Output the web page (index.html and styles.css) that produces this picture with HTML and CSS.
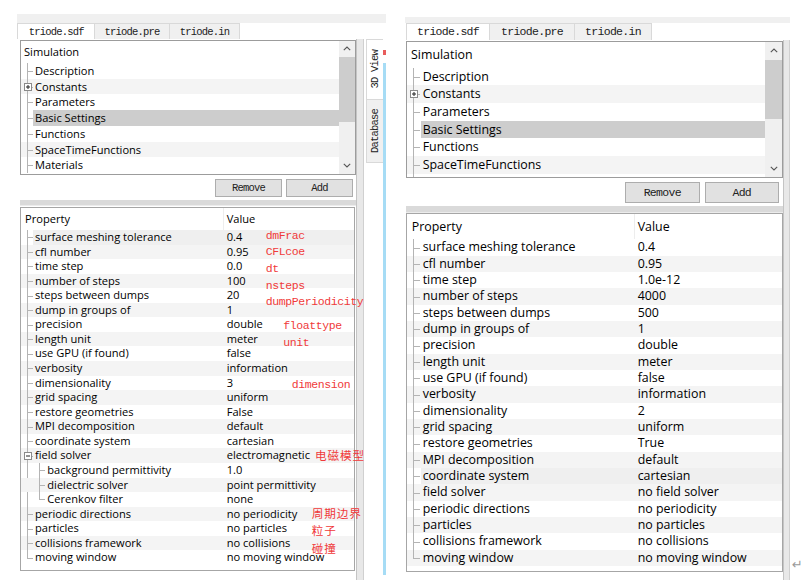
FILE: index.html
```html
<!DOCTYPE html>
<html lang="zh">
<head>
<meta charset="utf-8">
<title>triode.sdf</title>
<link rel="stylesheet" href="styles.css">
</head>
<body>
<div class="screen">

  <section class="win win-left">
    <div class="band"></div>
    <div class="win-body">
      <div class="pane">
        <div class="tabs">
          <div class="tab t1 active">triode.sdf</div>
          <div class="tab t2">triode.pre</div>
          <div class="tab t3">triode.in</div>
        </div>
        <div class="tree">
          <div class="tree-list">
            <div class="root">Simulation</div>
            <div class="node">Description</div>
            <div class="node alt"><svg class="exp" viewBox="0 0 8 8"><rect x=".5" y=".5" width="7" height="7" fill="#fff" stroke="#8a8a8a"/><path d="M2 4h4M4 2v4" stroke="#222"/></svg>Constants</div>
            <div class="node">Parameters</div>
            <div class="node sel">Basic Settings</div>
            <div class="node">Functions</div>
            <div class="node alt">SpaceTimeFunctions</div>
            <div class="node">Materials</div>
          </div>
          <div class="vscroll">
            <div class="sb-btn"><svg width="8" height="5" viewBox="0 0 8 5"><path d="M.8 4.2 4 1l3.2 3.2" fill="none" stroke="#555" stroke-width="1.1"/></svg></div>
            <div class="sb-thumb"></div>
            <div class="sb-track"></div>
            <div class="sb-btn"><svg width="8" height="5" viewBox="0 0 8 5"><path d="M.8.8 4 4l3.2-3.2" fill="none" stroke="#555" stroke-width="1.1"/></svg></div>
          </div>
        </div>
        <div class="btns">
          <button class="btn">Remove</button>
          <button class="btn">Add</button>
        </div>
        <div class="splitter"></div>
        <div class="props">
          <div class="phead"><div class="pc1">Property</div><div class="pc2">Value</div></div>
          <div class="prow cur"><div class="pc1">surface meshing tolerance</div><div class="pc2">0.4</div></div>
          <div class="prow alt"><div class="pc1">cfl number</div><div class="pc2">0.95</div></div>
          <div class="prow"><div class="pc1">time step</div><div class="pc2">0.0</div></div>
          <div class="prow alt"><div class="pc1">number of steps</div><div class="pc2">100</div></div>
          <div class="prow"><div class="pc1">steps between dumps</div><div class="pc2">20</div></div>
          <div class="prow alt"><div class="pc1">dump in groups of</div><div class="pc2">1</div></div>
          <div class="prow"><div class="pc1">precision</div><div class="pc2">double</div></div>
          <div class="prow alt"><div class="pc1">length unit</div><div class="pc2">meter</div></div>
          <div class="prow"><div class="pc1">use GPU (if found)</div><div class="pc2">false</div></div>
          <div class="prow alt"><div class="pc1">verbosity</div><div class="pc2">information</div></div>
          <div class="prow"><div class="pc1">dimensionality</div><div class="pc2">3</div></div>
          <div class="prow alt"><div class="pc1">grid spacing</div><div class="pc2">uniform</div></div>
          <div class="prow"><div class="pc1">restore geometries</div><div class="pc2">False</div></div>
          <div class="prow alt"><div class="pc1">MPI decomposition</div><div class="pc2">default</div></div>
          <div class="prow"><div class="pc1">coordinate system</div><div class="pc2">cartesian</div></div>
          <div class="prow alt"><svg class="exp" viewBox="0 0 8 8"><rect x=".5" y=".5" width="7" height="7" fill="#fff" stroke="#8a8a8a"/><path d="M2 4h4" stroke="#222"/></svg><div class="pc1">field solver</div><div class="pc2">electromagnetic</div></div>
          <div class="kids">
            <div class="prow"><div class="pc1">background permittivity</div><div class="pc2">1.0</div></div>
            <div class="prow alt"><div class="pc1">dielectric solver</div><div class="pc2">point permittivity</div></div>
            <div class="prow last"><div class="pc1">Cerenkov filter</div><div class="pc2">none</div></div>
          </div>
          <div class="prow alt"><div class="pc1">periodic directions</div><div class="pc2">no periodicity</div></div>
          <div class="prow"><div class="pc1">particles</div><div class="pc2">no particles</div></div>
          <div class="prow alt"><div class="pc1">collisions framework</div><div class="pc2">no collisions</div></div>
          <div class="prow last"><div class="pc1">moving window</div><div class="pc2">no moving window</div></div>

          <span class="note n-dmfrac">dmFrac</span>
          <span class="note n-cfl">CFLcoe</span>
          <span class="note n-dt">dt</span>
          <span class="note n-nsteps">nsteps</span>
          <span class="note n-dump">dumpPeriodicity</span>
          <span class="note n-float">floattype</span>
          <span class="note n-unit">unit</span>
          <span class="note n-dim">dimension</span>
          <span class="note cjk n-em">电磁模型</span>
          <span class="note cjk n-per">周期边界</span>
          <span class="note cjk n-part">粒子</span>
          <span class="note cjk n-coll">碰撞</span>
        </div>
      </div>
      <div class="vbar"></div>
      <div class="vtabs">
        <div class="vtab vtab-active"><span class="vtext">3D View</span></div>
        <div class="vtab vtab-db"><span class="vtext">Database</span></div>
      </div>
      <div class="side">
        <div class="side-mark"></div>
        <div class="side-line"></div>
      </div>
    </div>
  </section>

  <section class="win win-right">
    <div class="band"></div>
    <div class="win-body">
      <div class="pane">
        <div class="tabs">
          <div class="tab t1 active">triode.sdf</div>
          <div class="tab t2">triode.pre</div>
          <div class="tab t3">triode.in</div>
        </div>
        <div class="tree">
          <div class="tree-list">
            <div class="root">Simulation</div>
            <div class="node">Description</div>
            <div class="node alt"><svg class="exp" viewBox="0 0 8 8"><rect x=".5" y=".5" width="7" height="7" fill="#fff" stroke="#8a8a8a"/><path d="M2 4h4M4 2v4" stroke="#222"/></svg>Constants</div>
            <div class="node">Parameters</div>
            <div class="node sel">Basic Settings</div>
            <div class="node">Functions</div>
            <div class="node alt">SpaceTimeFunctions</div>
            <div class="node"></div>
          </div>
          <div class="vscroll">
            <div class="sb-btn"><svg width="8" height="5" viewBox="0 0 8 5"><path d="M.8 4.2 4 1l3.2 3.2" fill="none" stroke="#555" stroke-width="1.1"/></svg></div>
            <div class="sb-thumb"></div>
            <div class="sb-track"></div>
            <div class="sb-btn"><svg width="8" height="5" viewBox="0 0 8 5"><path d="M.8.8 4 4l3.2-3.2" fill="none" stroke="#555" stroke-width="1.1"/></svg></div>
          </div>
        </div>
        <div class="btns">
          <button class="btn">Remove</button>
          <button class="btn">Add</button>
        </div>
        <div class="splitter"></div>
        <div class="props">
          <div class="phead"><div class="pc1">Property</div><div class="pc2">Value</div></div>
          <div class="prow"><div class="pc1">surface meshing tolerance</div><div class="pc2">0.4</div></div>
          <div class="prow alt"><div class="pc1">cfl number</div><div class="pc2">0.95</div></div>
          <div class="prow"><div class="pc1">time step</div><div class="pc2">1.0e-12</div></div>
          <div class="prow alt"><div class="pc1">number of steps</div><div class="pc2">4000</div></div>
          <div class="prow"><div class="pc1">steps between dumps</div><div class="pc2">500</div></div>
          <div class="prow alt"><div class="pc1">dump in groups of</div><div class="pc2">1</div></div>
          <div class="prow"><div class="pc1">precision</div><div class="pc2">double</div></div>
          <div class="prow alt"><div class="pc1">length unit</div><div class="pc2">meter</div></div>
          <div class="prow"><div class="pc1">use GPU (if found)</div><div class="pc2">false</div></div>
          <div class="prow alt"><div class="pc1">verbosity</div><div class="pc2">information</div></div>
          <div class="prow"><div class="pc1">dimensionality</div><div class="pc2">2</div></div>
          <div class="prow alt"><div class="pc1">grid spacing</div><div class="pc2">uniform</div></div>
          <div class="prow"><div class="pc1">restore geometries</div><div class="pc2">True</div></div>
          <div class="prow alt"><div class="pc1">MPI decomposition</div><div class="pc2">default</div></div>
          <div class="prow cur"><div class="pc1">coordinate system</div><div class="pc2">cartesian</div></div>
          <div class="prow alt"><div class="pc1">field solver</div><div class="pc2">no field solver</div></div>
          <div class="prow"><div class="pc1">periodic directions</div><div class="pc2">no periodicity</div></div>
          <div class="prow alt"><div class="pc1">particles</div><div class="pc2">no particles</div></div>
          <div class="prow"><div class="pc1">collisions framework</div><div class="pc2">no collisions</div></div>
          <div class="prow alt last"><div class="pc1">moving window</div><div class="pc2">no moving window</div></div>
        </div>
      </div>
      <div class="vbar"></div>
    </div>
  </section>

  <div class="ret">↵</div>
</div>
</body>
</html>
```
FILE: styles.css
```css
* { box-sizing: border-box; }

html, body {
  margin: 0;
  padding: 0;
  background: #fff;
}

body {
  width: 803px;
  height: 580px;
  overflow: hidden;
  font-family: "Open Sans", "Noto Sans", sans-serif;
  color: #000;
}

.screen {
  display: flex;
  align-items: flex-start;
  height: 580px;
  padding-left: 17px;
}

/* ---------- window variables ---------- */
.win-left {
  --fs: 11.1px;
  --mono-fs: 10.5px;
  --mono-ls: -0.8px;
  --band-h: 9.3px;
  --tab-h: 16px;
  --tabs-ml: 0.3px;
  --t1w: 77.7px;
  --t2w: 75px;
  --t3w: 70px;
  --tree-mt: 0.7px;
  --box-ml: 3px;
  --box-w: 336px;
  --tree-h: 135px;
  --root-h: 22px;
  --root-pl: 3px;
  --row-h: 15.75px;
  --line-x: 6px;
  --stub-w: 6px;
  --text-x: 14px;
  --sel-x: 12px;
  --sb-w: 16px;
  --sb-btn: 16px;
  --thumb-h: 65px;
  --btn-mt: 4px;
  --btn-h: 18.5px;
  --btn-w: 67px;
  --btn-gap: 4px;
  --btn-pr: 3px;
  --split-mt: 2.5px;
  --split-h: 6px;
  --props-mt: 0.7px;
  --props-w: 335px;
  --props-h: 364.3px;
  --phead-h: 22.3px;
  --prow-h: 14.57px;
  --col1: 203px;
  --head-pl: 4px;
  --val-pl: 2.7px;
  --pane-w: 339px;
  --kid-line-x: 18.3px;
  --kid-text-x: 26.3px;
  --vbar-w: 8px;
  --vbar-mt: 16px;
  --vbar-h: 540.7px;

  margin-top: 14px;
  width: 369px;
}

.win-right {
  --fs: 12.4px;
  --mono-fs: 11.5px;
  --mono-ls: -0.7px;
  --band-h: 6px;
  --tab-h: 17.3px;
  --tabs-ml: 1px;
  --t1w: 84px;
  --t2w: 85px;
  --t3w: 77px;
  --tree-mt: 0.7px;
  --box-ml: 1px;
  --box-w: 377px;
  --tree-h: 137.6px;
  --root-h: 26px;
  --root-pl: 4px;
  --row-h: 17.7px;
  --line-x: 6.3px;
  --stub-w: 7px;
  --text-x: 15.7px;
  --sel-x: 13.7px;
  --sb-w: 17px;
  --sb-btn: 18px;
  --thumb-h: 59px;
  --btn-mt: 3.4px;
  --btn-h: 21.6px;
  --btn-w: 74.5px;
  --btn-gap: 5px;
  --btn-pr: 4px;
  --split-mt: 2.7px;
  --split-h: 7px;
  --props-mt: 0px;
  --props-w: 377px;
  --props-h: 359px;
  --phead-h: 25.5px;
  --prow-h: 16.33px;
  --col1: 228px;
  --head-pl: 4.7px;
  --val-pl: 2.7px;
  --pane-w: 378px;
  --vbar-w: 7px;
  --vbar-mt: 17.3px;
  --vbar-h: 540px;

  margin-top: 16.7px;
  margin-left: 19px;
  width: 385px;
}

/* ---------- window frame ---------- */
.win {
  display: flex;
  flex-direction: column;
}

.band {
  height: var(--band-h);
  background: #f0f0f0;
}

.win-body {
  display: flex;
  align-items: flex-start;
}

.pane {
  width: var(--pane-w);
  flex: none;
}

/* ---------- tabs ---------- */
.tabs {
  display: flex;
  height: var(--tab-h);
  margin-left: var(--tabs-ml);
}

.tab {
  height: 100%;
  display: flex;
  align-items: center;
  justify-content: center;
  font-family: "Liberation Mono", monospace;
  font-size: var(--mono-fs);
  letter-spacing: var(--mono-ls);
  color: #222;
  background: #f0f0f0;
  border: 1px solid #d9d9d9;
  border-bottom: none;
}

.tab + .tab { border-left: none; }
.tab.active { background: #fff; }
.t1 { width: var(--t1w); }
.t2 { width: var(--t2w); }
.t3 { width: var(--t3w); }

/* ---------- tree ---------- */
.tree {
  display: flex;
  margin-top: var(--tree-mt);
  margin-left: var(--box-ml);
  width: var(--box-w);
  height: var(--tree-h);
  border: 1px solid #9c9c9c;
  background: #fff;
  overflow: hidden;
  font-size: var(--fs);
}

.tree-list {
  flex: 1;
  min-width: 0;
}

.root {
  height: var(--root-h);
  line-height: var(--root-h);
  padding-left: var(--root-pl);
}

.node {
  position: relative;
  height: var(--row-h);
  line-height: var(--row-h);
  padding-left: var(--text-x);
  white-space: nowrap;
}

.node::before,
.prow::before,
.kids::before {
  content: "";
  position: absolute;
  left: var(--line-x);
  top: 0;
  bottom: 0;
  border-left: 1px solid #b4b4b4;
}

.node::after,
.prow::after {
  content: "";
  position: absolute;
  left: var(--line-x);
  top: 50%;
  width: var(--stub-w);
  border-top: 1px solid #b4b4b4;
}

.alt { background: #f4f4f4; }

.sel {
  background: linear-gradient(to right, transparent var(--sel-x), #cdcdcd var(--sel-x));
}

.cur {
  background: linear-gradient(to right, transparent var(--sel-x), #efefef var(--sel-x));
}

.exp {
  position: absolute;
  left: calc(var(--line-x) - 3.5px);
  top: 50%;
  width: 8px;
  height: 8px;
  margin-top: -4px;
  z-index: 1;
  display: block;
}

/* ---------- scrollbar ---------- */
.vscroll {
  width: var(--sb-w);
  flex: none;
  display: flex;
  flex-direction: column;
  background: #f0f0f0;
}

.sb-btn {
  height: var(--sb-btn);
  display: flex;
  align-items: center;
  justify-content: center;
  flex: none;
}

.sb-thumb {
  height: var(--thumb-h);
  background: #cdcdcd;
  flex: none;
}

.sb-track { flex: 1; }

/* ---------- buttons ---------- */
.btns {
  display: flex;
  justify-content: flex-end;
  gap: var(--btn-gap);
  padding-right: var(--btn-pr);
  margin-top: var(--btn-mt);
}

.btn {
  width: var(--btn-w);
  height: var(--btn-h);
  padding: 0;
  margin: 0;
  background: #e1e1e1;
  border: 1px solid #adadad;
  border-radius: 0;
  font-family: "Liberation Mono", monospace;
  font-size: var(--mono-fs);
  letter-spacing: var(--mono-ls);
  color: #222;
}

/* ---------- splitter ---------- */
.splitter {
  margin-top: var(--split-mt);
  margin-left: var(--box-ml);
  width: var(--box-w);
  height: var(--split-h);
  background: #dadada;
  border-bottom: 1px solid #ececec;
}

/* ---------- property table ---------- */
.props {
  position: relative;
  margin-top: var(--props-mt);
  margin-left: var(--box-ml);
  width: var(--props-w);
  height: var(--props-h);
  border: 1px solid #a6a6a6;
  background: #fff;
  font-size: var(--fs);
}

.phead {
  display: flex;
  height: var(--phead-h);
  line-height: var(--phead-h);
}

.phead .pc1 {
  width: var(--col1);
  flex: none;
  padding-left: var(--head-pl);
  border-right: 1px solid #ededed;
}

.phead .pc2 { padding-left: var(--val-pl); }

.prow {
  position: relative;
  display: flex;
  height: var(--prow-h);
  line-height: var(--prow-h);
  white-space: nowrap;
}

.prow .pc1 {
  width: var(--col1);
  flex: none;
  padding-left: var(--text-x);
}

.prow .pc2 { padding-left: var(--val-pl); }

.prow.last::before { bottom: 50%; }

.kids { position: relative; }

.kids .prow::before,
.kids .prow::after { left: var(--kid-line-x); }

.kids .prow .pc1 { padding-left: var(--kid-text-x); }

/* ---------- red annotations ---------- */
.note {
  position: absolute;
  z-index: 2;
  white-space: nowrap;
  font-family: "Liberation Mono", monospace;
  font-size: 11.5px;
  letter-spacing: -0.4px;
  line-height: 14px;
  color: #f03a3a;
}

.note.cjk {
  font-family: "Noto Sans CJK SC", sans-serif;
  font-size: 11.6px;
  letter-spacing: 0.9px;
  line-height: 13px;
}

.n-dmfrac { left: 244.7px; top: 21.1px; }
.n-cfl    { left: 244.7px; top: 37.8px; }
.n-dt     { left: 244.7px; top: 54.3px; }
.n-nsteps { left: 244.7px; top: 71.3px; }
.n-dump   { left: 244.7px; top: 87.8px; }
.n-float  { left: 262.3px; top: 111.6px; }
.n-unit   { left: 262.3px; top: 128.6px; }
.n-dim    { left: 270.7px; top: 170.3px; }
.n-em     { left: 294px;   top: 241.3px; }
.n-per    { left: 290.7px; top: 299.3px; }
.n-part   { left: 290.7px; top: 316.8px; }
.n-coll   { left: 290.7px; top: 334px; }

/* ---------- side strips ---------- */
.vbar {
  width: var(--vbar-w);
  flex: none;
  margin-top: var(--vbar-mt);
  height: var(--vbar-h);
  background: #e8e8e8;
  border-left: 1px solid #c4c4c4;
  border-right: 1px solid #d0d0d0;
}

.vtabs {
  width: 17px;
  flex: none;
  margin-left: 2px;
  margin-top: 16px;
  display: flex;
  flex-direction: column;
}

.vtab {
  display: flex;
  align-items: center;
  justify-content: center;
  border: 1px solid #d9d9d9;
  border-right: none;
}

.vtab-active {
  height: 60.7px;
  background: #fff;
}

.vtab-db {
  height: 63px;
  background: #f0f0f0;
  border-top: none;
}

.vtext {
  writing-mode: vertical-rl;
  transform: rotate(180deg);
  font-family: "Liberation Mono", monospace;
  font-size: 10.5px;
  letter-spacing: -0.8px;
  color: #222;
}

.side {
  width: 3px;
  flex: none;
  margin-top: 16px;
  height: 541px;
  display: flex;
  flex-direction: column;
}

.side-mark {
  margin-top: 10.7px;
  height: 5px;
  background: #e85c5c;
  flex: none;
}

.side-line {
  flex: 1;
  margin-top: 8px;
  margin-bottom: 5px;
  background: #a6dcf5;
}

.ret {
  align-self: flex-end;
  margin-left: 2px;
  margin-bottom: 9px;
  font-family: "DejaVu Sans", sans-serif;
  font-size: 13px;
  line-height: 13px;
  color: #9a9a9a;
}
```
